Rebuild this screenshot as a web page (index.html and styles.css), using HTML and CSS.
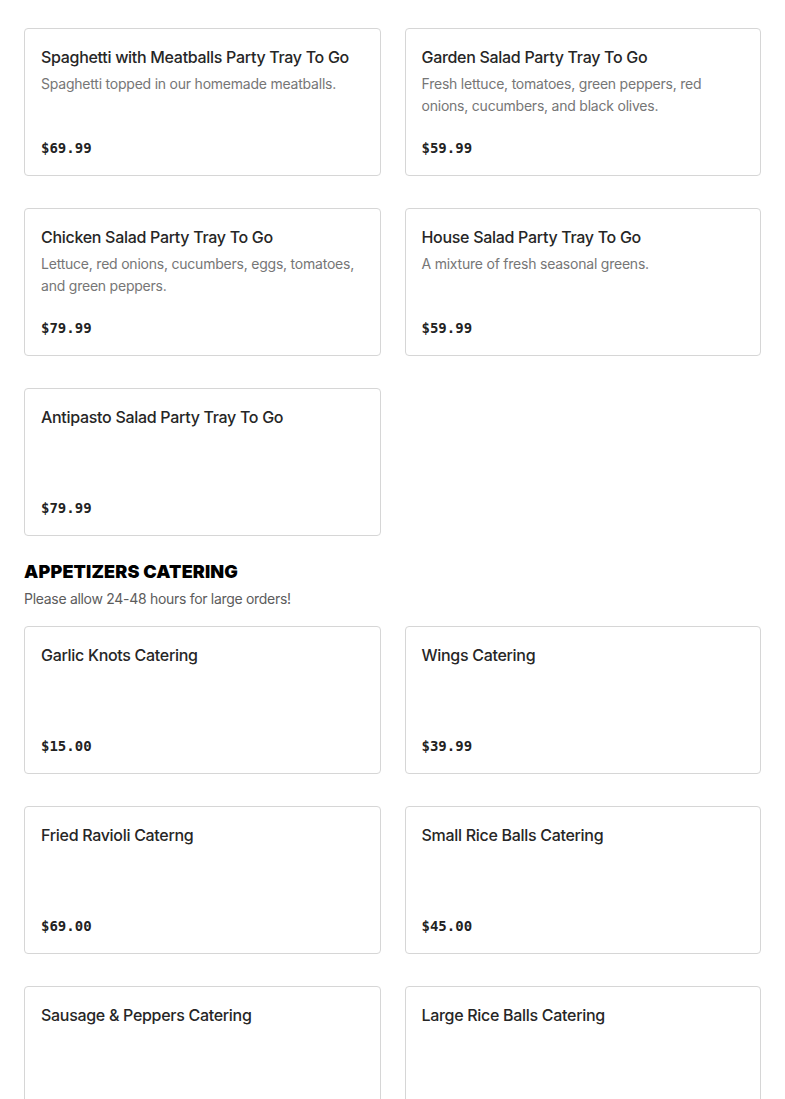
FILE: index.html
```html
<!DOCTYPE html>
<html lang="en">
<head>
<meta charset="utf-8">
<title>Catering Menu</title>
<link rel="stylesheet" href="styles.css">
</head>
<body>
<main class="menu">
  <section class="section">
    <div class="grid">
      <article class="card">
        <h3 class="card-title">Spaghetti with Meatballs Party Tray To Go</h3>
        <p class="card-desc">Spaghetti topped in our homemade meatballs.</p>
        <div class="card-price">$69.99</div>
      </article>
      <article class="card">
        <h3 class="card-title">Garden Salad Party Tray To Go</h3>
        <p class="card-desc">Fresh lettuce, tomatoes, green peppers, red onions, cucumbers, and black olives.</p>
        <div class="card-price">$59.99</div>
      </article>
      <article class="card">
        <h3 class="card-title">Chicken Salad Party Tray To Go</h3>
        <p class="card-desc">Lettuce, red onions, cucumbers, eggs, tomatoes, and green peppers.</p>
        <div class="card-price">$79.99</div>
      </article>
      <article class="card">
        <h3 class="card-title">House Salad Party Tray To Go</h3>
        <p class="card-desc">A mixture of fresh seasonal greens.</p>
        <div class="card-price">$59.99</div>
      </article>
      <article class="card">
        <h3 class="card-title">Antipasto Salad Party Tray To Go</h3>
        <div class="card-price">$79.99</div>
      </article>
    </div>
  </section>

  <section class="section">
    <header class="section-head">
      <h2 class="section-title">APPETIZERS CATERING</h2>
      <p class="section-note">Please allow 24-48 hours for large orders!</p>
    </header>
    <div class="grid">
      <article class="card">
        <h3 class="card-title">Garlic Knots Catering</h3>
        <div class="card-price">$15.00</div>
      </article>
      <article class="card">
        <h3 class="card-title">Wings Catering</h3>
        <div class="card-price">$39.99</div>
      </article>
      <article class="card">
        <h3 class="card-title">Fried Ravioli Caterng</h3>
        <div class="card-price">$69.00</div>
      </article>
      <article class="card">
        <h3 class="card-title">Small Rice Balls Catering</h3>
        <div class="card-price">$45.00</div>
      </article>
      <article class="card">
        <h3 class="card-title">Sausage &amp; Peppers Catering</h3>
        <div class="card-price">$65.00</div>
      </article>
      <article class="card">
        <h3 class="card-title">Large Rice Balls Catering</h3>
        <div class="card-price">$75.00</div>
      </article>
    </div>
  </section>
</main>
</body>
</html>
```

FILE: styles.css
```css
* { box-sizing: border-box; }

html, body {
  margin: 0;
  padding: 0;
  background: #ffffff;
}

body {
  font-family: "Inter", "Liberation Sans", sans-serif;
  color: #222222;
}

.menu {
  padding: 28px 24px 0;
}

.section {
  margin-bottom: 24px;
}

.grid {
  display: grid;
  grid-template-columns: 1fr 1fr;
  column-gap: 24px;
  row-gap: 32px;
}

.card {
  display: flex;
  flex-direction: column;
  height: 148px;
  padding: 16px 16px 17px;
  border: 1px solid #d6d6d6;
  border-radius: 4px;
  background: #fff;
}

.card-title {
  margin: 0;
  font-size: 16px;
  line-height: 24px;
  font-weight: 500;
  color: #262626;
  letter-spacing: -0.3px;
}

.card-desc {
  margin: 4px 0 0;
  font-size: 14px;
  line-height: 22px;
  color: #767676;
  letter-spacing: -0.22px;
}

.card-price {
  margin-top: auto;
  font-family: "DejaVu Sans Mono", "Liberation Mono", monospace;
  font-weight: bold;
  font-size: 14px;
  line-height: 20px;
  color: #222;
}

.section-head {
  margin-bottom: 16px;
}

.section-title {
  margin: 0;
  font-size: 18px;
  line-height: 24px;
  font-weight: 900;
  color: #000;
  letter-spacing: 0.15px;
}

.section-note {
  margin: 4px 0 0;
  font-size: 14px;
  line-height: 22px;
  color: #5c5c5c;
  letter-spacing: -0.3px;
}
```
